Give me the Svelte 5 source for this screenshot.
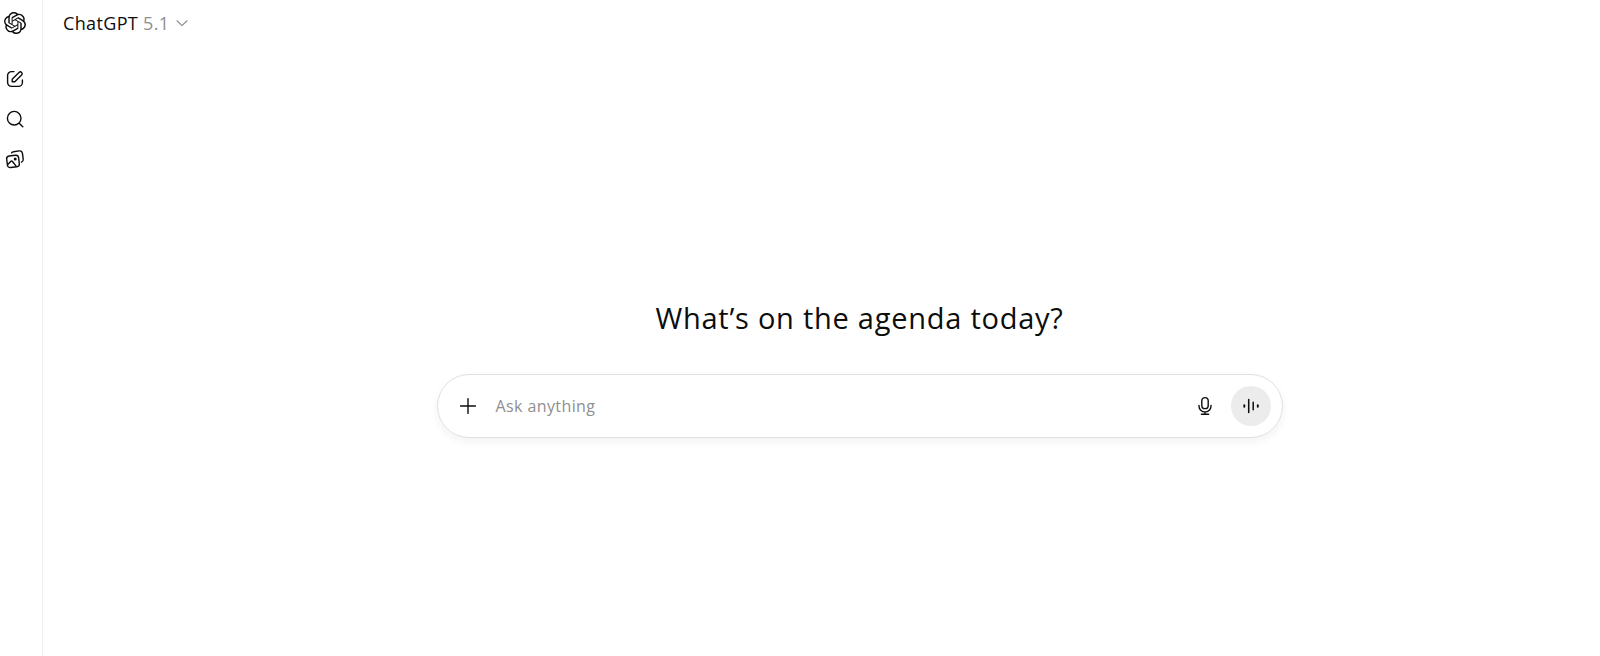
<script>
  const placeholder = 'Ask anything';
</script>

<div class="page">
  <aside class="rail">
    <svg class="logo" viewBox="0 0 24 24" width="22" height="22" fill="currentColor" aria-label="ChatGPT">
      <path d="M22.2819 9.8211a5.9847 5.9847 0 0 0-.5157-4.9108 6.0462 6.0462 0 0 0-6.5098-2.9A6.0651 6.0651 0 0 0 4.9807 4.1818a5.9847 5.9847 0 0 0-3.9977 2.9 6.0462 6.0462 0 0 0 .7427 7.0966 5.98 5.98 0 0 0 .511 4.9107 6.051 6.051 0 0 0 6.5146 2.9001A5.9847 5.9847 0 0 0 13.2599 24a6.0557 6.0557 0 0 0 5.7718-4.2058 5.9894 5.9894 0 0 0 3.9977-2.9001 6.0557 6.0557 0 0 0-.7475-7.0729zm-9.022 12.6081a4.4755 4.4755 0 0 1-2.8764-1.0408l.1419-.0804 4.7783-2.7582a.7948.7948 0 0 0 .3927-.6813v-6.7369l2.02 1.1686a.071.071 0 0 1 .038.052v5.5826a4.504 4.504 0 0 1-4.4945 4.4944zm-9.6607-4.1254a4.4708 4.4708 0 0 1-.5346-3.0137l.142.0852 4.783 2.7582a.7712.7712 0 0 0 .7806 0l5.8428-3.3685v2.3324a.0804.0804 0 0 1-.0332.0615L9.74 19.9502a4.4992 4.4992 0 0 1-6.1408-1.6464zM2.3408 7.8956a4.485 4.485 0 0 1 2.3655-1.9728V11.6a.7664.7664 0 0 0 .3879.6765l5.8144 3.3543-2.0201 1.1685a.0757.0757 0 0 1-.071 0l-4.8303-2.7865A4.504 4.504 0 0 1 2.3408 7.872zm16.5963 3.8558L13.1038 8.364 15.1192 7.2a.0757.0757 0 0 1 .071 0l4.8303 2.7913a4.4944 4.4944 0 0 1-.6765 8.1042v-5.6772a.79.79 0 0 0-.407-.667zm2.0107-3.0231l-.142-.0852-4.7735-2.7818a.7759.7759 0 0 0-.7854 0L9.409 9.2297V6.8974a.0662.0662 0 0 1 .0284-.0615l4.8303-2.7866a4.4992 4.4992 0 0 1 6.6802 4.66zM8.3065 12.863l-2.02-1.1638a.0804.0804 0 0 1-.038-.0567V6.0742a4.4992 4.4992 0 0 1 7.3757-3.4537l-.142.0805L8.704 5.459a.7948.7948 0 0 0-.3927.6813zm1.0976-2.3654l2.602-1.4998 2.6069 1.4998v2.9994l-2.5974 1.5093-2.6067-1.4997Z"/>
    </svg>
    <nav class="rail-icons">
      <svg viewBox="0 0 20 20" width="20" height="20" fill="none" stroke="currentColor" stroke-width="1.4" stroke-linecap="round" stroke-linejoin="round">
        <path d="M9 2.6H6.5A3.9 3.9 0 0 0 2.6 6.5v7a3.9 3.9 0 0 0 3.9 3.9h7a3.9 3.9 0 0 0 3.9-3.9V11"/>
        <path d="M7.2 12.8v-2.6l6.8-6.8a1.8 1.8 0 0 1 2.6 2.6l-6.8 6.8z"/>
      </svg>
      <svg viewBox="0 0 20 20" width="20" height="20" fill="none" stroke="currentColor" stroke-width="1.4" stroke-linecap="round">
        <circle cx="9.2" cy="9.2" r="6.8"/>
        <path d="M14.2 14.2l3.6 3.6"/>
      </svg>
      <svg viewBox="0 0 20 20" width="20" height="20" fill="none" stroke="currentColor" stroke-width="1.4" stroke-linecap="round" stroke-linejoin="round">
        <rect x="2" y="6.6" width="12" height="11.6" rx="2.8" transform="rotate(-7 8 12.4)"/>
        <path d="M6.6 3.9a2.4 2.4 0 0 1 1.9-1.2l5.8-.8a2.8 2.8 0 0 1 3.1 2.3l.8 6a2.8 2.8 0 0 1-1.7 3"/>
        <path d="M3 15.2l2.9-2.9a1 1 0 0 1 1.4 0l3.6 4.6"/>
        <circle cx="10.2" cy="10" r=".8"/>
      </svg>
    </nav>
  </aside>

  <main class="main">
    <header class="top">
      <span class="model">ChatGPT <span class="version">5.1</span></span>
      <svg class="chevron" viewBox="0 0 12 12" width="12" height="12" fill="none" stroke="currentColor" stroke-width="1.2" stroke-linecap="round" stroke-linejoin="round">
        <path d="M1 3.8l5 4.8 5-4.8"/>
      </svg>
    </header>

    <section class="center">
      <h1>What’s on the agenda today?</h1>
      <form class="composer">
        <svg class="plus" viewBox="0 0 20 20" width="20" height="20" fill="none" stroke="currentColor" stroke-width="1.4" stroke-linecap="round">
          <path d="M10 2.6v14.8M2.6 10h14.8"/>
        </svg>
        <span class="placeholder">{placeholder}</span>
        <svg class="mic" viewBox="0 0 20 20" width="20" height="20" fill="none" stroke="currentColor" stroke-width="1.4" stroke-linecap="round">
          <rect x="6.8" y="1.6" width="6.4" height="11" rx="3.2"/>
          <path d="M4 9.4v.5a6 6 0 0 0 12 0v-.5M10 16v2M6.4 18.3h7.2"/>
        </svg>
        <span class="voice">
          <svg viewBox="0 0 20 20" width="20" height="20" fill="none" stroke="currentColor" stroke-linecap="round">
            <path stroke-width="1.5" d="M7.7 3.6v12.8M12.2 6.2v7.6"/>
            <path stroke-width="1.9" d="M3.3 9.2v1.6M16.8 9.2v1.6"/>
          </svg>
        </span>
      </form>
    </section>
  </main>
</div>

<style>
  :global(body) {
    background: #fff;
    font-family: "Open Sans", "Noto Sans", sans-serif;
    color: #0d0d0d;
  }

  .page {
    display: flex;
    height: 656px;
    overflow: hidden;
  }

  .rail {
    width: 42px;
    flex: none;
    border-right: 1px solid #f0f0f0;
    display: flex;
    flex-direction: column;
    align-items: center;
    padding-top: 12px;
  }

  .logo {
    margin-left: -13px;
  }

  .rail-icons {
    display: flex;
    flex-direction: column;
    gap: 20px;
    margin-top: 35px;
    margin-left: -13px;
  }

  .main {
    flex: 1;
    display: flex;
    flex-direction: column;
    min-width: 0;
  }

  .top {
    display: flex;
    align-items: center;
    gap: 7px;
    padding: 10px 0 0 20px;
    height: 26px;
  }

  .model {
    font-size: 18px;
    line-height: 26px;
    letter-spacing: 0.35px;
  }

  .version {
    color: #8f8f8f;
  }

  .chevron {
    color: #8f8f8f;
  }

  .center {
    display: flex;
    flex-direction: column;
    align-items: center;
    padding-left: 76px;
    margin-top: 262px;
  }

  h1 {
    margin: 0 0 36px;
    font-size: 29px;
    font-weight: 400;
    line-height: 40px;
    letter-spacing: 0.75px;
  }

  .composer {
    width: 846px;
    height: 64px;
    box-sizing: border-box;
    border: 1px solid #e0e0e0;
    border-radius: 32px;
    box-shadow: 0 4px 8px rgba(0, 0, 0, 0.05);
    display: flex;
    align-items: center;
    padding: 0 11px 0 20px;
  }

  .plus {
    flex: none;
  }

  .placeholder {
    flex: 1;
    margin-left: 18px;
    font-size: 16px;
    letter-spacing: 0.4px;
    color: #8f8f8f;
  }

  .mic {
    flex: none;
    margin-right: 16px;
  }

  .voice {
    flex: none;
    width: 40px;
    height: 40px;
    border-radius: 50%;
    background: #ececec;
    display: flex;
    align-items: center;
    justify-content: center;
  }
</style>
